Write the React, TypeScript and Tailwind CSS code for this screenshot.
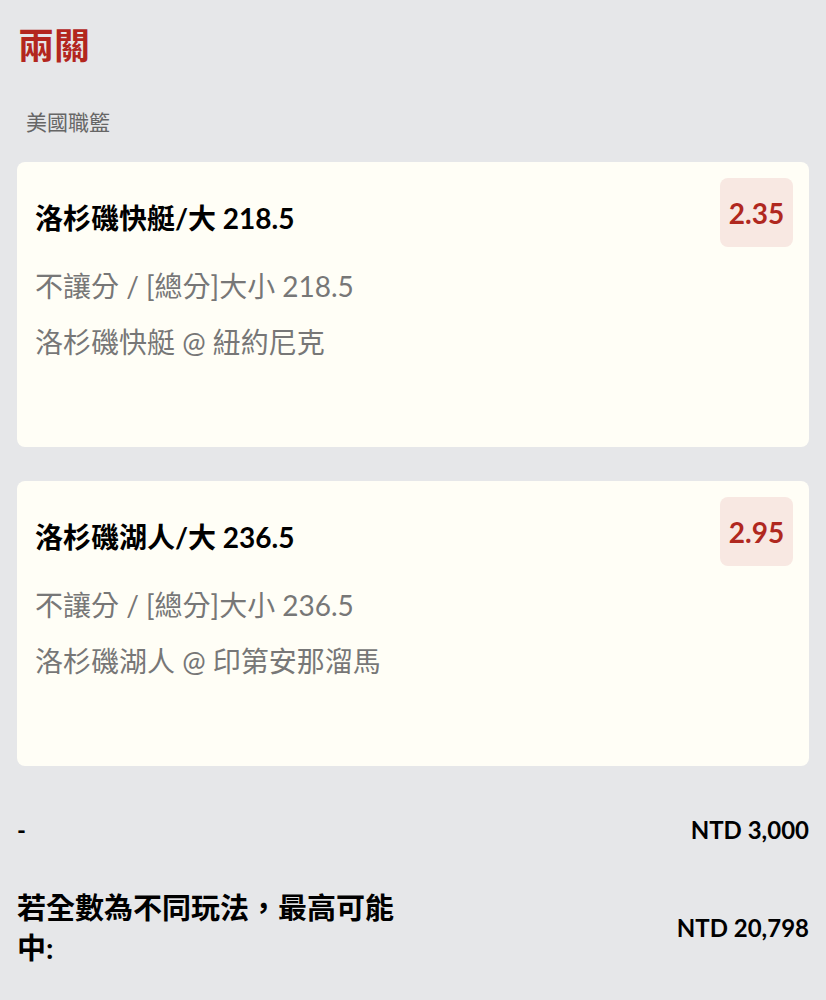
const font = { fontFamily: 'Lato, "Noto Sans CJK TC", sans-serif' };

type Leg = { title: string; market: string; match: string; odds: string };

const legs: Leg[] = [
  {
    title: "洛杉磯快艇/大 218.5",
    market: "不讓分 / [總分]大小 218.5",
    match: "洛杉磯快艇 @ 紐約尼克",
    odds: "2.35",
  },
  {
    title: "洛杉磯湖人/大 236.5",
    market: "不讓分 / [總分]大小 236.5",
    match: "洛杉磯湖人 @ 印第安那溜馬",
    odds: "2.95",
  },
];

function LegCard({ leg }: { leg: Leg }) {
  return (
    <div className="flex h-[285px] items-start justify-between rounded-lg bg-[#fffef6] p-4 pl-[18px]">
      <div className="pt-[22px]">
        <div className="text-[28px] font-bold leading-[36px] text-black">{leg.title}</div>
        <div className="mt-8 text-[28px] leading-[36px] text-[#777777]">{leg.market}</div>
        <div className="mt-5 text-[28px] leading-[36px] text-[#777777]">{leg.match}</div>
      </div>
      <div className="flex h-[69px] w-[73px] items-center justify-center rounded-lg bg-[#f8e8e2] text-[28px] font-bold text-[#b0281f]">
        {leg.odds}
      </div>
    </div>
  );
}

export default function App() {
  return (
    <main className="min-h-[1000px] bg-[#e6e7e9] px-[17px] pt-[22px]" style={font}>
      <h1 className="pl-[1px] text-[36px] font-bold leading-[46px] text-[#b3261e]">兩關</h1>
      <p className="mt-[40px] pl-[9px] text-[21px] leading-[28px] text-[#666666]">美國職籃</p>

      <div className="mt-[26px] flex flex-col gap-[34px]">
        {legs.map((leg) => (
          <LegCard key={leg.title} leg={leg} />
        ))}
      </div>

      <div className="mt-[48px] flex items-center justify-between">
        <span className="text-[24px] font-bold leading-[32px] text-black">-</span>
        <span className="text-[24px] font-bold leading-[32px] text-black">NTD 3,000</span>
      </div>

      <div className="mt-[42px] flex items-center justify-between">
        <span className="w-[400px] text-[29px] font-bold leading-[40px] text-black">
          若全數為不同玩法，最高可能中:
        </span>
        <span className="text-[24px] font-bold leading-[32px] text-black">NTD 20,798</span>
      </div>
    </main>
  );
}
